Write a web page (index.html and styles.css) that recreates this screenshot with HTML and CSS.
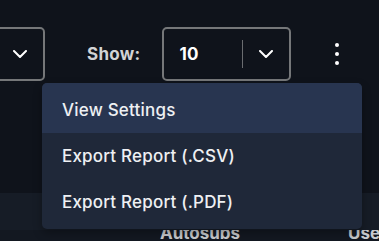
FILE: index.html
```html
<!DOCTYPE html>
<html lang="en">

<head>
    <meta charset="UTF-8">
    <meta name="viewport" content="width=device-width, initial-scale=1.0">
    <title>Report toolbar</title>
    <link rel="stylesheet" href="styles.css">
</head>

<body>
    <div class="toolbar">
        <div class="select select-left">
            <svg class="chevron" width="14" height="8" viewBox="0 0 14 8"><path d="M1 1l6 6 6-6" fill="none" stroke="#fff" stroke-width="2" stroke-linecap="round" stroke-linejoin="round"/></svg>
        </div>
        <span class="show-label">Show:</span>
        <div class="select select-show">
            <span class="select-value">10</span>
            <span class="divider"></span>
            <svg class="chevron" width="14" height="8" viewBox="0 0 14 8"><path d="M1 1l6 6 6-6" fill="none" stroke="#fff" stroke-width="2" stroke-linecap="round" stroke-linejoin="round"/></svg>
        </div>
        <button class="kebab" aria-label="More">
            <span></span><span></span><span></span>
        </button>
    </div>

    <div class="table-head">
        <div class="head-band"></div>
        <div class="head-row">
            <span class="col col-autosubs">Autosubs</span>
            <span class="col col-users">Users</span>
        </div>
    </div>

    <!-- Menu abierto del boton de opciones -->
    <ul class="menu">
        <li class="menu-item active">View Settings</li>
        <li class="menu-item">Export Report (.CSV)</li>
        <li class="menu-item">Export Report (.PDF)</li>
    </ul>
</body>

</html>
```

FILE: styles.css
```css
body {
    margin: 0;
    background: #0f131b;
    font-family: Inter, 'Noto Sans', sans-serif;
    color: #f2f2f2;
    height: 241px;
    overflow: hidden;
    position: relative;
}

.toolbar {
    display: flex;
    align-items: center;
    padding-top: 27px;
    height: 54px;
}

.select {
    box-sizing: border-box;
    height: 54px;
    border: 2px solid #757779;
    border-radius: 5px;
    display: flex;
    align-items: center;
}

.select-left {
    width: 62px;
    margin-left: -17px;
    justify-content: flex-end;
    padding-right: 16px;
}

.show-label {
    margin-left: 42px;
    font-size: 17px;
    font-weight: 700;
    letter-spacing: 0.3px;
    color: #d2d3d5;
}

.select-show {
    width: 129px;
    margin-left: 21px;
    padding-left: 16px;
}

.select-value {
    font-size: 17px;
    font-weight: 700;
    color: #fff;
    width: 62px;
}

.divider {
    width: 1px;
    height: 28px;
    background: #6a6c70;
    margin-right: 16px;
}

.kebab {
    margin-left: 40px;
    background: none;
    border: none;
    padding: 0 4px;
    display: flex;
    flex-direction: column;
    gap: 5px;
}

.kebab span {
    width: 4px;
    height: 4px;
    border-radius: 50%;
    background: #fff;
}

.table-head {
    margin-top: 112px;
}

.head-band {
    height: 37px;
    background: #161c26;
}

.head-row {
    height: 11px;
    overflow: hidden;
    background: #131821;
    display: flex;
    font-size: 17px;
    font-weight: 700;
    line-height: 20px;
    color: #c9cbce;
}

.col {
    margin-top: -7px;
    flex-shrink: 0;
}

.col-autosubs {
    margin-left: 160px;
    width: 188px;
}

.menu {
    position: absolute;
    top: 83px;
    left: 42px;
    width: 320px;
    margin: 0;
    padding: 0 0 4px;
    list-style: none;
    background: #1f2839;
    border-radius: 5px;
    overflow: hidden;
    box-shadow: 0 4px 10px rgba(0, 0, 0, 0.3);
}

.menu-item {
    height: 46px;
    line-height: 46px;
    padding-left: 20px;
    font-size: 17px;
    font-weight: 500;
    letter-spacing: 0.2px;
    color: #eef0f3;
}

.menu-item.active {
    background: #283550;
    height: 50px;
    line-height: 54px;
}
```
